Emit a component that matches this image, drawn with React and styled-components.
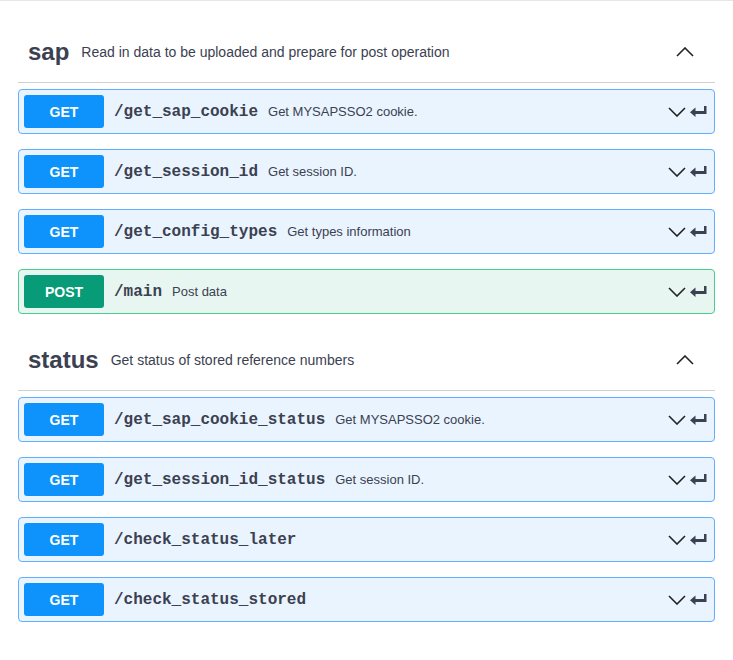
import React from 'react';
import styled, { createGlobalStyle } from 'styled-components';

const GlobalStyle = createGlobalStyle`
    body {
        margin: 0;
        background: #fff;
        font-family: "Liberation Sans", Arial, sans-serif;
        color: #3b4151;
    }
`

const methods = {
    GET: { badge: '#0d93fb', bg: '#eaf4fe', border: '#61affe' },
    POST: { badge: '#079c77', bg: '#e8f6f1', border: '#49cc90' },
};

const tags = [
    {
        name: 'sap',
        description: 'Read in data to be uploaded and prepare for post operation',
        ops: [
            { method: 'GET', path: '/get_sap_cookie', summary: 'Get MYSAPSSO2 cookie.' },
            { method: 'GET', path: '/get_session_id', summary: 'Get session ID.' },
            { method: 'GET', path: '/get_config_types', summary: 'Get types information' },
            { method: 'POST', path: '/main', summary: 'Post data' },
        ],
    },
    {
        name: 'status',
        description: 'Get status of stored reference numbers',
        ops: [
            { method: 'GET', path: '/get_sap_cookie_status', summary: 'Get MYSAPSSO2 cookie.' },
            { method: 'GET', path: '/get_session_id_status', summary: 'Get session ID.' },
            { method: 'GET', path: '/check_status_later', summary: '' },
            { method: 'GET', path: '/check_status_stored', summary: '' },
        ],
    },
];

const Chevron = ({ up }) => (
    <svg width="18" height="10" viewBox="0 0 18 10">
        <polyline
            points={up ? '1,9 9,1 17,9' : '1,1 9,9 17,1'}
            fill="none"
            stroke="#222"
            strokeWidth="1.6"
        />
    </svg>
);

const EnterArrow = () => (
    <svg width="17" height="11" viewBox="0 0 17 11">
        <path d="M16.5 0 H14 V5 H5.5 V1.5 L0 6.3 L5.5 11 V8 H16.5 Z" fill="#3b4151" />
    </svg>
);

const App = () => {
    return (
        <Page>
            <GlobalStyle />
            {tags.map((tag) => (
                <Section key={tag.name}>
                    <TagHeading>
                        <TagName>{tag.name}</TagName>
                        <TagDescription>{tag.description}</TagDescription>
                        <Chevron up />
                    </TagHeading>
                    <OpList>
                        {tag.ops.map((op) => (
                            <OpBlock key={op.path} $method={op.method}>
                                <Badge $method={op.method}>{op.method}</Badge>
                                <Path>{op.path}</Path>
                                <Summary>{op.summary}</Summary>
                                <Icons>
                                    <Chevron />
                                    <EnterArrow />
                                </Icons>
                            </OpBlock>
                        ))}
                    </OpList>
                </Section>
            ))}
        </Page>
    )
}

const Page = styled.main`
    border-top: 1px solid #e6e6e6;
    padding: 20px 18px 30px;
`

const Section = styled.section`
    display: flex;
    flex-direction: column;
`

const TagHeading = styled.h3`
    box-sizing: border-box;
    display: flex;
    align-items: center;
    height: 62px;
    margin: 0 0 6px;
    padding: 0 21px 0 10px;
    border-bottom: 1px solid #cfd0d3;
`

const TagName = styled.span`
    font-size: 24px;
    font-weight: 700;
    color: #3b4151;
`

const TagDescription = styled.small`
    flex: 1;
    padding: 0 10px 0 12px;
    font-size: 14px;
    font-weight: 400;
    color: #3b4151;
`

const OpList = styled.div`
    display: flex;
    flex-direction: column;
`

const OpBlock = styled.div`
    display: flex;
    align-items: center;
    padding: 5px;
    margin-bottom: 15px;
    border: 1px solid ${(p) => methods[p.$method].border};
    border-radius: 4px;
    background: ${(p) => methods[p.$method].bg};
`

const Badge = styled.span`
    display: flex;
    align-items: center;
    justify-content: center;
    width: 80px;
    height: 33px;
    border-radius: 3px;
    background: ${(p) => methods[p.$method].badge};
    color: #fff;
    font-size: 14px;
    font-weight: 700;
`

const Path = styled.span`
    padding: 0 10px;
    font-family: "Liberation Mono", "Courier New", monospace;
    font-size: 16px;
    font-weight: 700;
    color: #3b4151;
`

const Summary = styled.span`
    flex: 1;
    font-size: 13px;
    color: #3b4151;
`

const Icons = styled.div`
    display: flex;
    align-items: center;
    gap: 4px;
    margin-right: 2px;
`

export default App;
